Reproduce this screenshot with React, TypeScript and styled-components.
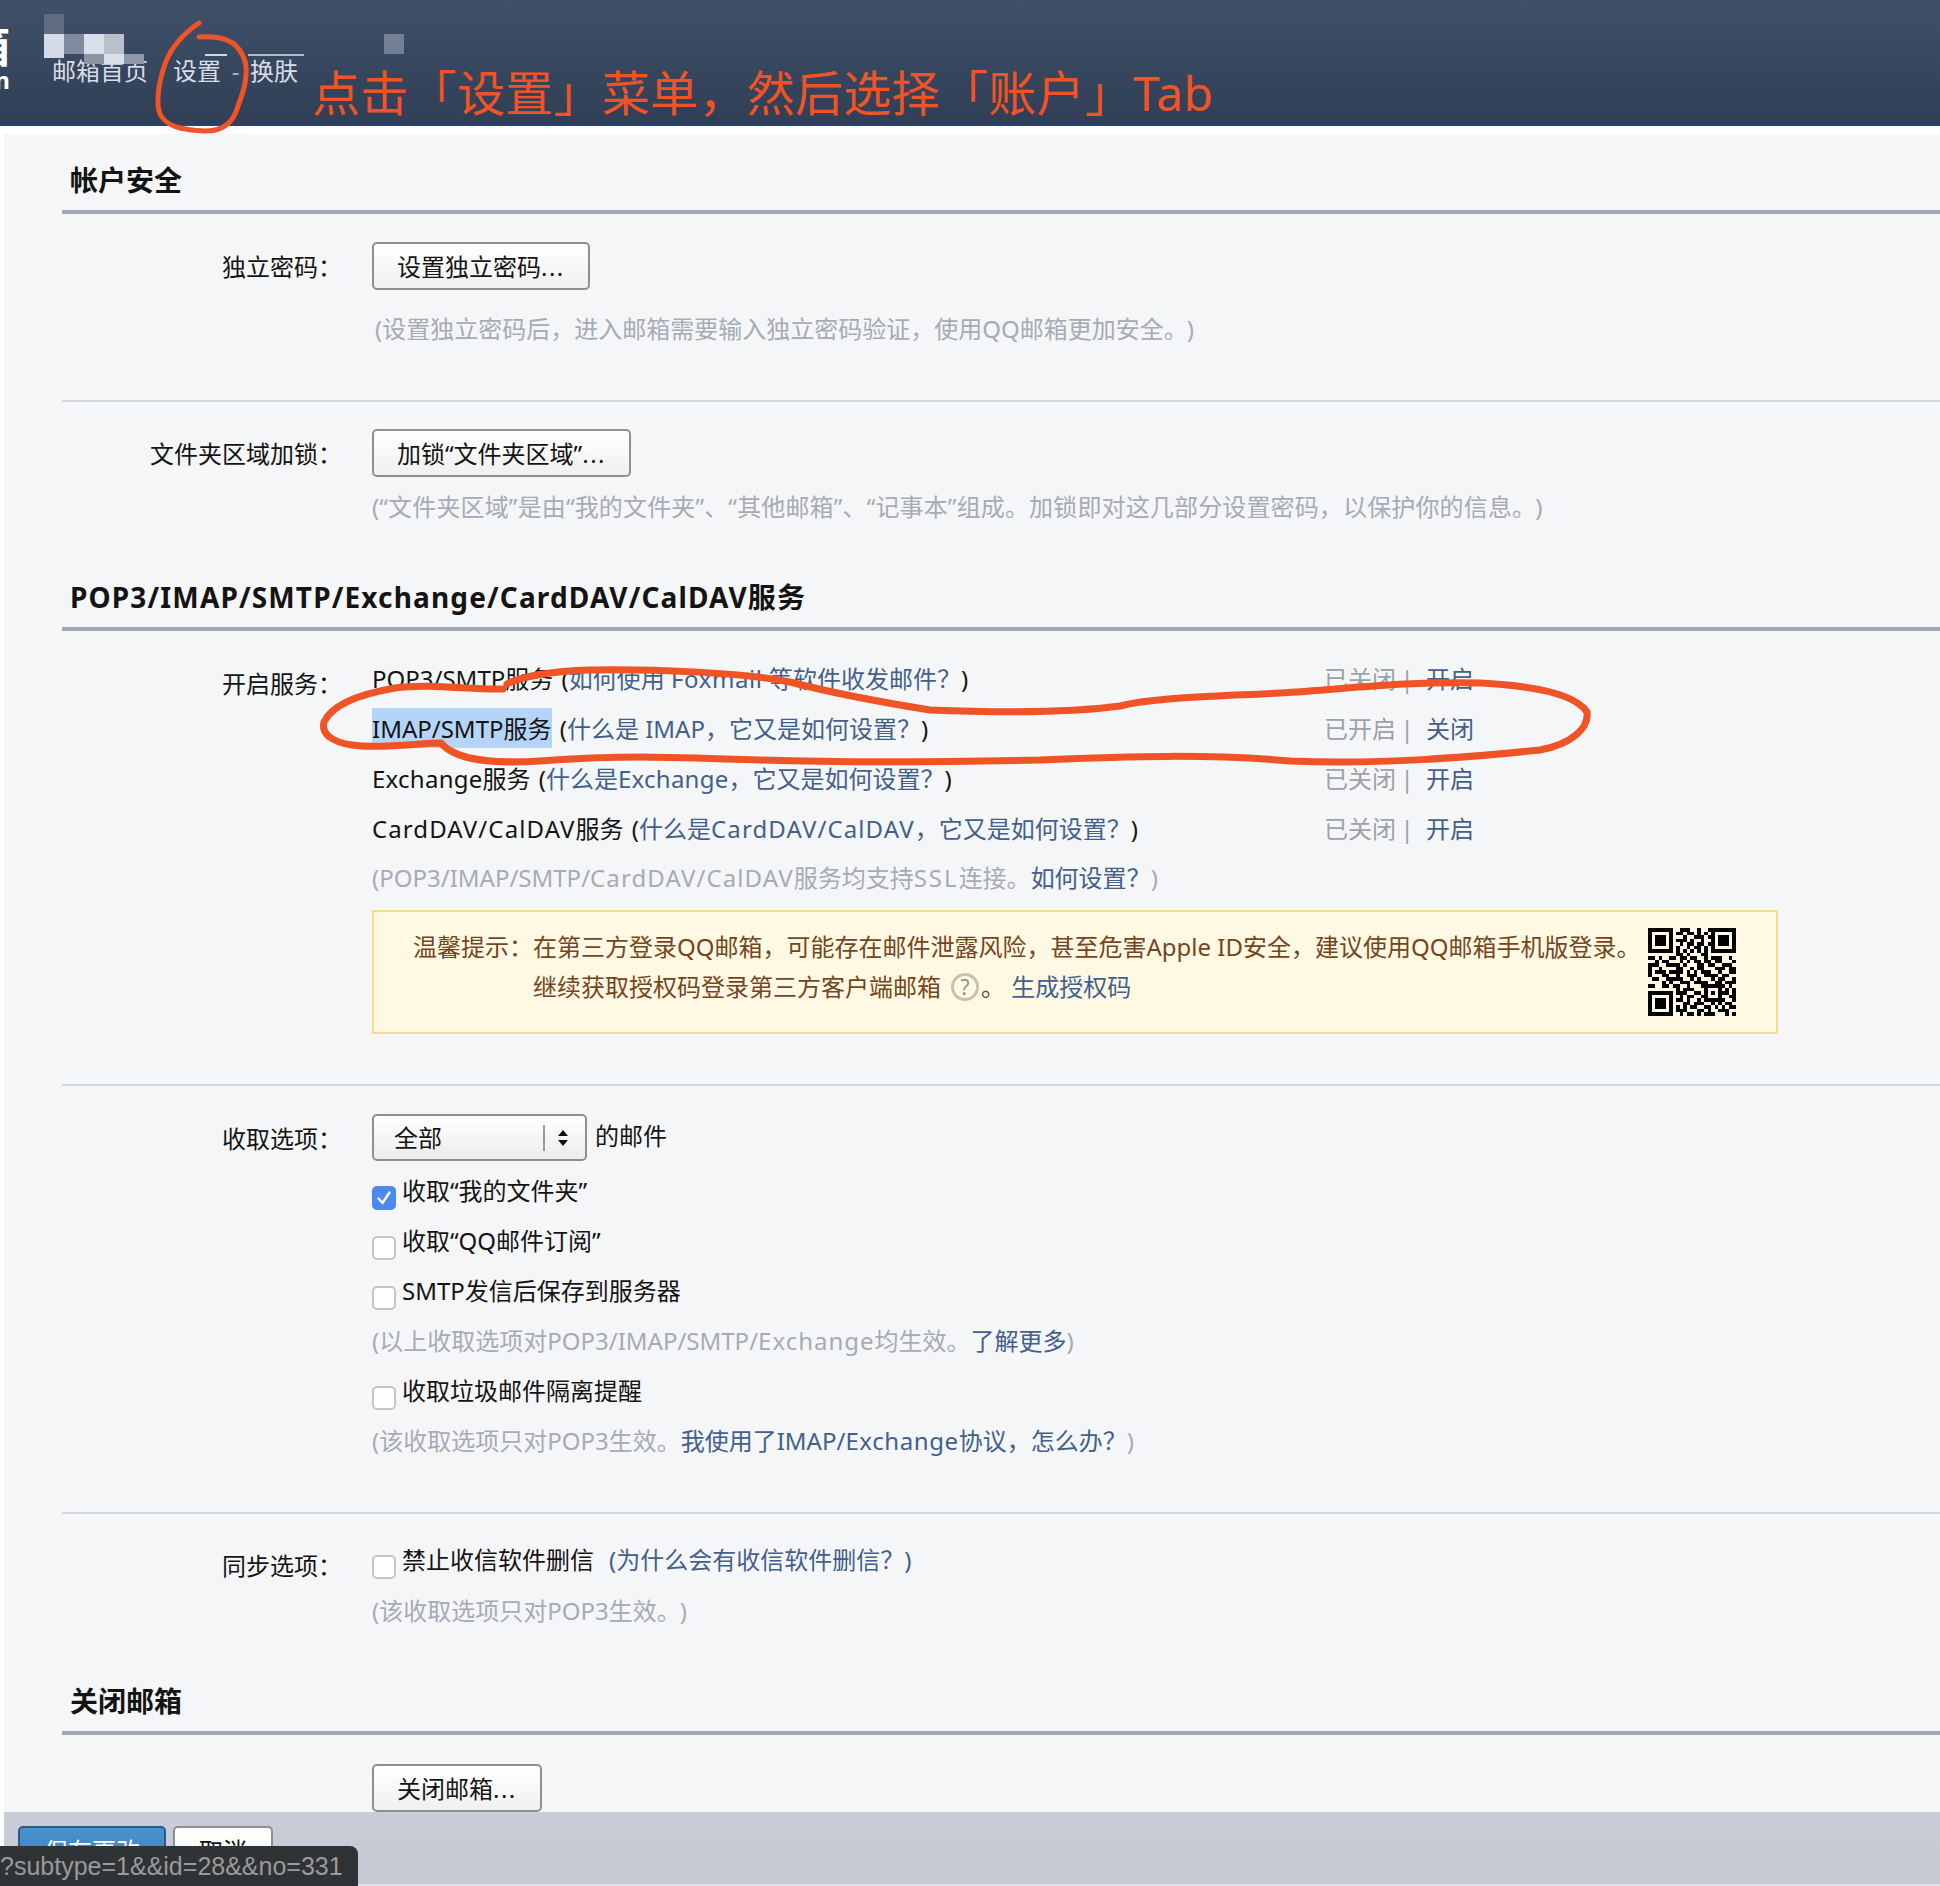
import React, {FC, ReactNode} from "react";
import styled, {createGlobalStyle} from "styled-components";

const Colors = {
    text: "#141414",
    hint: "#a6abb6",
    link: "#43608c",
    status: "#9da1a8",
    rule: "#a1a8b3",
    sep: "#d3d7df",
    page: "#f5f6f8",
    brown: "#75461c",
    red: "#f05326",
};

const GlobalStyle = createGlobalStyle`
  html, body {
    margin: 0;
    padding: 0;
    background: #fff;
    font-family: "Noto Sans", "Noto Sans CJK SC", sans-serif;
    font-size: 24px;
    color: ${Colors.text};
  }
`;

const Wrapper = styled.div`
  position: relative;
  width: 1940px;
  height: 1886px;
  overflow: hidden;
  background: #fff;
`;

const Header = styled.div`
  height: 124px;
  display: flex;
  background: linear-gradient(#3f5068, #303f56);
  border-bottom: 2px solid #2b4279;
  overflow: hidden;
`;

const LogoClip = styled.div`
  width: 44px;
  margin-left: -34px;
  padding-top: 24px;
  flex-shrink: 0;
  color: #fff;
  font-weight: 700;
  font-size: 44px;
  line-height: 44px;
  text-align: right;
  span {
    display: block;
    font-size: 24px;
    line-height: 24px;
  }
`;

const Nav = styled.div`
  display: flex;
  align-items: flex-start;
  margin-left: 42px;
  padding-top: 51px;
  line-height: 40px;
  color: #d8dde6;
`;

const NavItem = styled.span<{$gap?: number}>`
  margin-left: ${p => p.$gap || 0}px;
`;

const NavDash = styled.span`
  width: 29px;
  text-align: center;
  color: #aab2bf;
`;

const Page = styled.div`
  margin: 8px 0 0 4px;
  height: 1678px;
  padding-left: 58px;
  background: ${Colors.page};
  overflow: hidden;
`;

const Heading = styled.h2<{$top: number; $track?: number}>`
  margin: ${p => p.$top}px 0 0 0;
  padding: 0 0 10px 8px;
  font-size: 28px;
  line-height: 40px;
  font-weight: 700;
  letter-spacing: ${p => p.$track || 0}px;
  border-bottom: 4px solid ${Colors.rule};
`;

const Block = styled.div<{$top: number; $bottom?: number; $line?: boolean}>`
  padding: ${p => p.$top}px 0 ${p => p.$bottom || 0}px 0;
  border-bottom: ${p => p.$line ? `2px solid ${Colors.sep}` : "none"};
`;

const FormRow = styled.div`
  display: grid;
  grid-template-columns: 280px 1fr;
  column-gap: 30px;
`;

const Label = styled.div<{$top?: number}>`
  text-align: right;
  line-height: 40px;
  margin-top: ${p => p.$top || 0}px;
  white-space: nowrap;
`;

const Button = styled.button`
  height: 48px;
  padding: 2px 23px 0;
  border: 2px solid #8f8f8f;
  border-radius: 5px;
  background: linear-gradient(#fff, #f0f0f0);
  font: inherit;
  line-height: 40px;
  color: ${Colors.text};
`;

const Dots = styled.span`
  letter-spacing: 1.5px;
`;

const Hint = styled.div<{$top?: number; $indent?: number; $track?: number}>`
  margin-top: ${p => p.$top || 0}px;
  padding-left: ${p => p.$indent || 0}px;
  line-height: 40px;
  letter-spacing: ${p => p.$track || 0}px;
  color: ${Colors.hint};
  white-space: nowrap;
`;

const CloseParen = styled.span`
  margin-left: 11px;
`;

const Latin = styled.span<{$track: number}>`
  letter-spacing: ${p => p.$track}px;
`;

const Link = styled.a<{$gap?: number}>`
  margin-left: ${p => p.$gap || 0}px;
  color: ${Colors.link};
`;

const ServiceRow = styled.div`
  display: grid;
  grid-template-columns: 952px auto;
  justify-content: start;
  height: 40px;
  margin-bottom: 10px;
  line-height: 42px;
  white-space: nowrap;
`;

const Selected = styled.span`
  display: inline-block;
  height: 40px;
  background: #b5d5f8;
`;

const Paren = styled.span`
  margin-left: 2px;
`;

const Status = styled.div`
  display: flex;
  color: ${Colors.status};
`;

const StatusBar = styled.span`
  width: 22px;
  margin-right: 8px;
  text-align: center;
`;

const Notice = styled.div`
  display: flex;
  justify-content: space-between;
  align-items: flex-start;
  box-sizing: border-box;
  width: 1406px;
  height: 124px;
  margin-top: 12px;
  padding: 15px 40px 0 39px;
  background: #fff8e3;
  border: 2px solid #f5dd8e;
  color: ${Colors.brown};
  line-height: 40px;
`;

const NoticeText = styled.div`
  display: flex;
  white-space: nowrap;
`;

const HelpMark = styled.span`
  display: inline-block;
  box-sizing: border-box;
  width: 28px;
  height: 28px;
  margin: 0 2px 0 10px;
  border: 3px solid #c6c5a6;
  border-radius: 50%;
  color: #8f8f86;
  font-size: 21px;
  line-height: 22px;
  text-align: center;
  vertical-align: 1px;
  filter: blur(0.5px);
`;

const QrWrap = styled.svg`
  flex-shrink: 0;
  width: 88px;
  height: 88px;
  margin-top: 1px;
`;

const SelectRow = styled.div`
  display: flex;
  line-height: 40px;
`;

const SelectBox = styled.div`
  box-sizing: border-box;
  width: 215px;
  height: 47px;
  display: flex;
  align-items: center;
  padding-left: 20px;
  border: 2px solid #8f8f8f;
  border-radius: 5px;
  background: linear-gradient(#fff, #ececec);
`;

const SelectDivider = styled.span`
  width: 2px;
  height: 26px;
  margin-left: 101px;
  background: #9a9a9a;
`;

const SelectArrows = styled.svg`
  width: 12px;
  height: 18px;
  margin-left: 12px;
`;

const SelectSuffix = styled.span`
  margin-left: 8px;
  margin-top: 2px;
`;

const CheckRow = styled.div<{$top?: number}>`
  display: flex;
  align-items: flex-start;
  height: 40px;
  margin-top: ${p => p.$top || 0}px;
  line-height: 38px;
  white-space: nowrap;
`;

const CheckBox = styled.span<{$checked?: boolean}>`
  box-sizing: border-box;
  flex-shrink: 0;
  width: 24px;
  height: 24px;
  margin: 14px 6px 0 0;
  display: flex;
  align-items: center;
  justify-content: center;
  border-radius: 5px;
  border: ${p => p.$checked ? "none" : "2px solid #c6c6c6"};
  background: ${p => p.$checked ? "#4c88f1" : "#fff"};
`;

const Footer = styled.div`
  box-sizing: border-box;
  height: 74px;
  margin-left: 4px;
  padding: 14px 0 0 14px;
  display: flex;
  gap: 7px;
  background: linear-gradient(#c9cdd7, #c3c8d3);
  border-bottom: 2px solid #dfe2e8;
  overflow: hidden;
  button {
    padding: 2px 24px 0;
  }
`;

const SaveButton = styled(Button)`
  border-color: #2a5c8b;
  background: linear-gradient(#4b92cd, #3b7db8);
  color: #fff;
`;

const UrlTip = styled.div`
  position: absolute;
  left: 0;
  bottom: 0;
  width: 358px;
  height: 40px;
  box-sizing: border-box;
  padding-right: 16px;
  background: #303336;
  border-top-right-radius: 8px;
  color: #9a9a9a;
  font-family: "Liberation Sans", sans-serif;
  font-size: 25px;
  line-height: 40px;
  text-align: right;
  white-space: nowrap;
  overflow: hidden;
`;

const Mosaic = styled.svg`
  position: absolute;
  left: 0;
  top: 0;
  width: 420px;
  height: 124px;
  pointer-events: none;
  filter: blur(0.6px);
`;

const Scribble = styled.svg`
  position: absolute;
  left: 0;
  top: 0;
  width: 1940px;
  height: 1886px;
  pointer-events: none;
`;

const Annotation = styled.div`
  position: absolute;
  left: 312px;
  top: 58px;
  color: ${Colors.red};
  font-size: 48px;
  letter-spacing: 0.3px;
  line-height: 70px;
  white-space: nowrap;
`;

const qrRows = [
    "1111111001110010011111111",
    "1000001011011010101000001",
    "1011101000100111011011101",
    "1011101011101001001011101",
    "1011101001011011011011101",
    "1000001010010110101000001",
    "1111111010101010101111111",
    "0000000011010001100000000",
    "1101001101101100101110010",
    "0010110001010110110110001",
    "1110011110100011011001110",
    "1001000011001011000111011",
    "1011101111010101110010011",
    "1000110010011100111101100",
    "0110011111001010001011001",
    "0000101001110111100110111",
    "1100110110010001111111010",
    "0000000010111000100010101",
    "1111111011100110101011101",
    "1000001001011001100010011",
    "1011101011010010111111001",
    "1011101000110111001010110",
    "1011101010101100110101011",
    "1000001011100011010011100",
    "1111111001011010111000101",
];

const QrCode: FC = () => (
    <QrWrap viewBox="0 0 25 25" shapeRendering="crispEdges">
        {qrRows.map((row, y) => row.split("").map((cell, x) => (
            cell === "1" ? <rect key={`${x}-${y}`} x={x} y={y} width={1} height={1} fill="#000"/> : null
        )))}
    </QrWrap>
);

const Tick: FC = () => (
    <svg width="16" height="16" viewBox="0 0 16 16">
        <path d="M2.5 8.5 L6.5 13 L13.5 2.5" fill="none" stroke="#fff" strokeWidth="2.4" strokeLinecap="round" strokeLinejoin="round"/>
    </svg>
);

const services: {id: string; name: ReactNode; link: ReactNode; state: string; action: string; selected?: boolean}[] = [
    {
        id: "pop3",
        name: "POP3/SMTP服务",
        link: <>如何使用 <Latin $track={0.6}>Foxmail</Latin> 等软件收发邮件？</>,
        state: "已关闭",
        action: "开启",
    },
    {id: "imap", name: "IMAP/SMTP服务", link: "什么是 IMAP，它又是如何设置？", state: "已开启", action: "关闭", selected: true},
    {
        id: "exchange",
        name: <><Latin $track={0.25}>Exchange</Latin>服务</>,
        link: <>什么是<Latin $track={0.25}>Exchange</Latin>，它又是如何设置？</>,
        state: "已关闭",
        action: "开启",
    },
    {
        id: "dav",
        name: <><Latin $track={1.1}>CardDAV/CalDAV</Latin>服务</>,
        link: <>什么是<Latin $track={1.1}>CardDAV/CalDAV</Latin>，它又是如何设置？</>,
        state: "已关闭",
        action: "开启",
    },
];

const App: FC = () => (
    <Wrapper>
        <GlobalStyle/>
        <Header>
            <LogoClip>箱<span>m</span></LogoClip>
            <Nav>
                <NavItem>邮箱首页</NavItem>
                <NavItem $gap={25}>设置</NavItem>
                <NavDash>-</NavDash>
                <NavItem>换肤</NavItem>
            </Nav>
        </Header>
        <Page>
            <Heading $top={26}>帐户安全</Heading>
            <Block $top={28} $bottom={51} $line>
                <FormRow>
                    <Label $top={5}>独立密码：</Label>
                    <div>
                        <Button>设置独立密码<Dots>...</Dots></Button>
                        <Hint $top={19} $indent={3}>(设置独立密码后，进入邮箱需要输入独立密码验证，使用QQ邮箱更加安全。<CloseParen>)</CloseParen></Hint>
                    </div>
                </FormRow>
            </Block>
            <Block $top={27}>
                <FormRow>
                    <Label $top={5}>文件夹区域加锁：</Label>
                    <div>
                        <Button>加锁“文件夹区域”<Dots>...</Dots></Button>
                        <Hint $top={10} $track={0.15}>(“文件夹区域”是由“我的文件夹”、“其他邮箱”、“记事本”组成。加锁即对这几部分设置密码，以保护你的信息。<CloseParen>)</CloseParen></Hint>
                    </div>
                </FormRow>
            </Block>
            <Heading $top={50} $track={1.15}>POP3/IMAP/SMTP/Exchange/CardDAV/CalDAV服务</Heading>
            <Block $top={27} $bottom={50} $line>
                <FormRow>
                    <Label $top={6}>开启服务：</Label>
                    <div>
                        {services.map(item => (
                            <ServiceRow key={item.id}>
                                <div>
                                    {item.selected ? <Selected>{item.name}</Selected> : item.name}
                                    {" "}<Paren>(</Paren><Link>{item.link}</Link>)
                                </div>
                                <Status>
                                    {item.state}
                                    <StatusBar>|</StatusBar>
                                    <Link>{item.action}</Link>
                                </Status>
                            </ServiceRow>
                        ))}
                        <Hint>(POP3/IMAP/SMTP/<Latin $track={1.1}>CardDAV/CalDAV</Latin>服务均支持<Latin $track={2}>SSL</Latin>连接。<Link>如何设置？</Link>)</Hint>
                        <Notice>
                            <NoticeText>
                                <span>温馨提示：</span>
                                <div>
                                    在第三方登录QQ邮箱，可能存在邮件泄露风险，甚至危害Apple ID安全，建议使用QQ邮箱手机版登录。
                                    <br/>
                                    继续获取授权码登录第三方客户端邮箱<HelpMark>?</HelpMark>。 <Link>生成授权码</Link>
                                </div>
                            </NoticeText>
                            <QrCode/>
                        </Notice>
                    </div>
                </FormRow>
            </Block>
            <Block $top={28} $bottom={51} $line>
                <FormRow>
                    <Label $top={5}>收取选项：</Label>
                    <div>
                        <SelectRow>
                            <SelectBox>
                                全部
                                <SelectDivider/>
                                <SelectArrows viewBox="0 0 12 18">
                                    <path d="M6 1 L11 7 H1 Z M6 17 L1 11 H11 Z" fill="#111"/>
                                </SelectArrows>
                            </SelectBox>
                            <SelectSuffix>的邮件</SelectSuffix>
                        </SelectRow>
                        <CheckRow $top={11}><CheckBox $checked><Tick/></CheckBox>收取“我的文件夹”</CheckRow>
                        <CheckRow $top={10}><CheckBox/>收取“QQ邮件订阅”</CheckRow>
                        <CheckRow $top={10}><CheckBox/>SMTP发信后保存到服务器</CheckRow>
                        <Hint $top={9}>(以上收取选项对POP3/IMAP/SMTP/<Latin $track={1}>Exchange</Latin>均生效。<Link>了解更多</Link>)</Hint>
                        <CheckRow $top={11}><CheckBox/>收取垃圾邮件隔离提醒</CheckRow>
                        <Hint $top={9}>(该收取选项只对POP3生效。<Link>我使用了IMAP/<Latin $track={0.6}>Exchange</Latin>协议，怎么办？</Link>)</Hint>
                    </div>
                </FormRow>
            </Block>
            <Block $top={27}>
                <FormRow>
                    <Label $top={5}>同步选项：</Label>
                    <div>
                        <CheckRow>
                            <CheckBox/>禁止收信软件删信 <Link $gap={15}>(为什么会有收信软件删信？)</Link>
                        </CheckRow>
                        <Hint $top={10}>(该收取选项只对POP3生效。<CloseParen>)</CloseParen></Hint>
                    </div>
                </FormRow>
            </Block>
            <Heading $top={50}>关闭邮箱</Heading>
            <Block $top={29}>
                <FormRow>
                    <span/>
                    <div>
                        <Button>关闭邮箱<Dots>...</Dots></Button>
                    </div>
                </FormRow>
            </Block>
        </Page>
        <Footer>
            <SaveButton>保存更改</SaveButton>
            <Button>取消</Button>
        </Footer>
        <UrlTip>?subtype=1&amp;&amp;id=28&amp;&amp;no=331</UrlTip>
        <Mosaic viewBox="0 0 420 124">
            <rect x="44" y="14" width="20" height="20" fill="#5f6c80"/>
            <rect x="44" y="34" width="20" height="24" fill="#d6dce7"/>
            <rect x="64" y="34" width="20" height="20" fill="#7f8a9c"/>
            <rect x="84" y="34" width="20" height="20" fill="#d9dfe9"/>
            <rect x="104" y="34" width="20" height="20" fill="#b9c0cb"/>
            <rect x="84" y="54" width="20" height="10" fill="#8b95a6"/>
            <rect x="104" y="54" width="20" height="10" fill="#d9dfe9"/>
            <rect x="124" y="54" width="20" height="10" fill="#8f98a8"/>
            <rect x="384" y="34" width="20" height="20" fill="#737f92"/>
            <rect x="205" y="54" width="22" height="2" fill="#cfd5de"/>
            <rect x="248" y="54" width="56" height="2" fill="#b6bdc9"/>
        </Mosaic>
        <Annotation>点击「设置」菜单，然后选择「账户」Tab</Annotation>
        <Scribble viewBox="0 0 1940 1886" fill="none" stroke={Colors.red} strokeLinecap="round" strokeLinejoin="round">
            <path strokeWidth="5" d="M199 23 C180 36 170 50 165 64 C158 84 156 104 160 114 C166 126 180 130 205 131 C226 131 234 120 238 106 C246 86 249 68 243 56 C236 40 222 36 199 37"/>
            <path strokeWidth="7" d="M503 689 C470 690 430 683 395 688 C360 694 332 705 324 722 C321 734 332 742 352 745 C380 749 420 743 441 743 C455 760 490 764 540 761 C620 755 680 757 760 760 C850 763 950 762 1040 760 C1130 756 1210 754 1290 761 C1380 765 1470 757 1540 750 C1572 744 1589 728 1587 712 C1576 695 1540 686 1480 683 C1400 681 1340 690 1280 693 C1200 697 1150 698 1120 706 C1060 714 980 712 930 710 C880 702 840 695 790 682 C740 672 650 669 590 670 C550 671 520 677 507 684"/>
        </Scribble>
    </Wrapper>
);

export default App;
